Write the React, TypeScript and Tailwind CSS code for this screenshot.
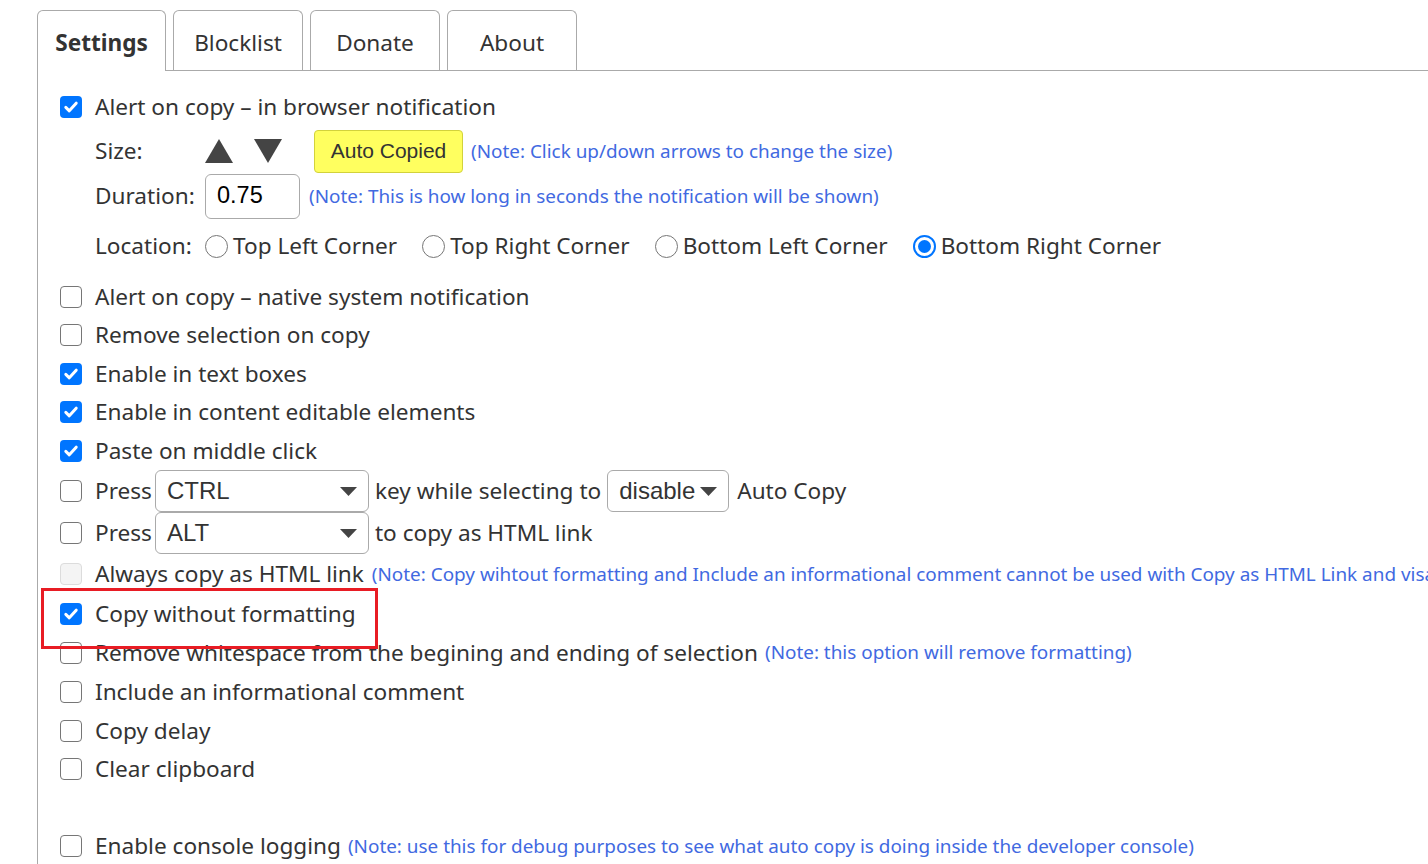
import type { ReactNode } from 'react';

const tabs = ['Settings', 'Blocklist', 'Donate', 'About'];

function Check({ checked = false, disabled = false }: { checked?: boolean; disabled?: boolean }) {
  if (disabled) {
    return <span className="block h-[22px] w-[22px] shrink-0 rounded-[4px] border border-[#dcdcdc] bg-[#f4f4f4]" />;
  }
  if (checked) {
    return (
      <span className="flex h-[22px] w-[22px] shrink-0 items-center justify-center rounded-[4px] bg-[#0075ff]">
        <svg width="16" height="16" viewBox="0 0 16 16">
          <path d="M2.8 8.4 L6.3 11.8 L13.2 4.2" fill="none" stroke="white" strokeWidth="3" strokeLinecap="round" strokeLinejoin="round" />
        </svg>
      </span>
    );
  }
  return <span className="block h-[22px] w-[22px] shrink-0 rounded-[4px] border-[1.5px] border-[#767676] bg-white" />;
}

function Radio({ checked = false }: { checked?: boolean }) {
  if (checked) {
    return (
      <span className="flex h-[23px] w-[23px] shrink-0 items-center justify-center rounded-full border-[2px] border-[#0075ff] bg-white">
        <span className="block h-[13px] w-[13px] rounded-full bg-[#0075ff]" />
      </span>
    );
  }
  return <span className="block h-[23px] w-[23px] shrink-0 rounded-full border-[1.5px] border-[#767676] bg-white" />;
}

function Note({ children, className = '' }: { children: ReactNode; className?: string }) {
  return <span className={`whitespace-nowrap text-[18.9px] text-[#4169e1] ${className}`}>{children}</span>;
}

function Caret() {
  return (
    <svg width="17" height="9" viewBox="0 0 17 9">
      <path d="M0 0 H17 L8.5 9 Z" fill="#444" />
    </svg>
  );
}

function Select({ value, width }: { value: string; width: string }) {
  return (
    <span
      className={`flex h-[42px] ${width} shrink-0 items-center justify-between rounded-[6px] border border-[#aaa] bg-white pl-[11px] pr-[11px] font-['Liberation_Sans',Arial,sans-serif] text-[24px] text-[#333]`}
    >
      {value}
      <Caret />
    </span>
  );
}

function Row({
  checked,
  disabled,
  height = 'h-[38px]',
  children,
}: {
  checked?: boolean;
  disabled?: boolean;
  height?: string;
  children: ReactNode;
}) {
  return (
    <div className={`flex ${height} items-center whitespace-nowrap`}>
      <Check checked={checked} disabled={disabled} />
      <div className="ml-[13px] flex items-center">{children}</div>
    </div>
  );
}

export default function App() {
  return (
    <div className="relative h-[864px] w-[1428px] overflow-hidden bg-white pl-[37px] pt-[10px] font-['Noto_Sans','Open_Sans',sans-serif] text-[22.6px] text-[#333]">
      <div className="w-[1600px]">
        <div className="flex gap-[7px] border-b border-[#aaa]">
          {tabs.map((t, i) =>
            i === 0 ? (
              <div
                key={t}
                className="-mb-px flex h-[61px] w-[129px] items-center justify-center rounded-t-[6px] border border-b-0 border-[#aaa] bg-white pt-[4px] font-bold"
              >
                {t}
              </div>
            ) : (
              <div
                key={t}
                className="flex h-[60px] w-[130px] items-center justify-center rounded-t-[6px] border border-b-0 border-[#aaa] bg-white pt-[4px]"
              >
                {t}
              </div>
            ),
          )}
        </div>

        <div className="border-l border-[#aaa] pb-[40px] pl-[22px] pt-[17px]">
          <Row checked>Alert on copy – in browser notification</Row>

          <div className="mt-[3px] flex h-[44px] items-center pl-[35px]">
            <span className="w-[110px]">Size:</span>
            <svg width="28" height="24" viewBox="0 0 28 24">
              <path d="M14 0 L28 24 H0 Z" fill="#444" />
            </svg>
            <svg width="28" height="24" viewBox="0 0 28 24" className="ml-[21px]">
              <path d="M0 0 H28 L14 24 Z" fill="#444" />
            </svg>
            <span className="ml-[32px] flex h-[43px] w-[149px] items-center justify-center rounded-[4px] border border-[#d2d23c] bg-[#ffff5f] font-['Liberation_Sans',Arial,sans-serif] text-[21px] text-[#333]">
              Auto Copied
            </span>
            <Note className="ml-[8px]">(Note: Click up/down arrows to change the size)</Note>
          </div>

          <div className="flex h-[46px] items-center pl-[35px]">
            <span className="w-[110px]">Duration:</span>
            <span className="flex h-[45px] w-[95px] items-center rounded-[6px] border border-[#aaa] pl-[11px] font-['Liberation_Sans',Arial,sans-serif] text-[23.5px] text-black">
              0.75
            </span>
            <Note className="ml-[9px]">(Note: This is how long in seconds the notification will be shown)</Note>
          </div>

          <div className="mt-[4px] flex h-[46px] items-center whitespace-nowrap pl-[35px]">
            <span className="w-[110px]">Location:</span>
            <Radio />
            <span className="ml-[5px]">Top Left Corner</span>
            <span className="ml-[25px]">
              <Radio />
            </span>
            <span className="ml-[5px]">Top Right Corner</span>
            <span className="ml-[25px]">
              <Radio />
            </span>
            <span className="ml-[5px]">Bottom Left Corner</span>
            <span className="ml-[25px]">
              <Radio checked />
            </span>
            <span className="ml-[5px]">Bottom Right Corner</span>
          </div>

          <div className="mt-[9px]">
            <Row>Alert on copy – native system notification</Row>
            <Row>Remove selection on copy</Row>
            <Row checked height="h-[39px]">Enable in text boxes</Row>
            <Row checked height="h-[38px]">Enable in content editable elements</Row>
            <Row checked height="h-[39px]">Paste on middle click</Row>
            <Row height="h-[42px]">
              <span>Press</span>
              <span className="ml-[3px]">
                <Select value="CTRL" width="w-[214px]" />
              </span>
              <span className="ml-[6px]">key while selecting to</span>
              <span className="ml-[6px]">
                <Select value="disable" width="w-[122px]" />
              </span>
              <span className="ml-[8px]">Auto Copy</span>
            </Row>
            <Row height="h-[42px]">
              <span>Press</span>
              <span className="ml-[3px]">
                <Select value="ALT" width="w-[214px]" />
              </span>
              <span className="ml-[6px]">to copy as HTML link</span>
            </Row>
            <Row disabled height="h-[40px]">
              <span>Always copy as HTML link</span>
              <Note className="ml-[8px]">
                (Note: Copy wihtout formatting and Include an informational comment cannot be used with Copy as HTML Link and visa versa)
              </Note>
            </Row>
            <Row checked height="h-[39px]">Copy without formatting</Row>
            <Row height="h-[39px]">
              <span>Remove whitespace from the begining and ending of selection</span>
              <Note className="ml-[7px]">(Note: this option will remove formatting)</Note>
            </Row>
            <Row height="h-[40px]">Include an informational comment</Row>
            <Row>Copy delay</Row>
            <Row>Clear clipboard</Row>
            <div className="h-[39px]" />
            <Row>
              <span>Enable console logging</span>
              <Note className="ml-[7px]">
                (Note: use this for debug purposes to see what auto copy is doing inside the developer console)
              </Note>
            </Row>
          </div>
        </div>
      </div>

      <div className="absolute left-[41px] top-[588px] h-[61px] w-[337px] border-[3px] border-[#e81c24]" />
    </div>
  );
}
